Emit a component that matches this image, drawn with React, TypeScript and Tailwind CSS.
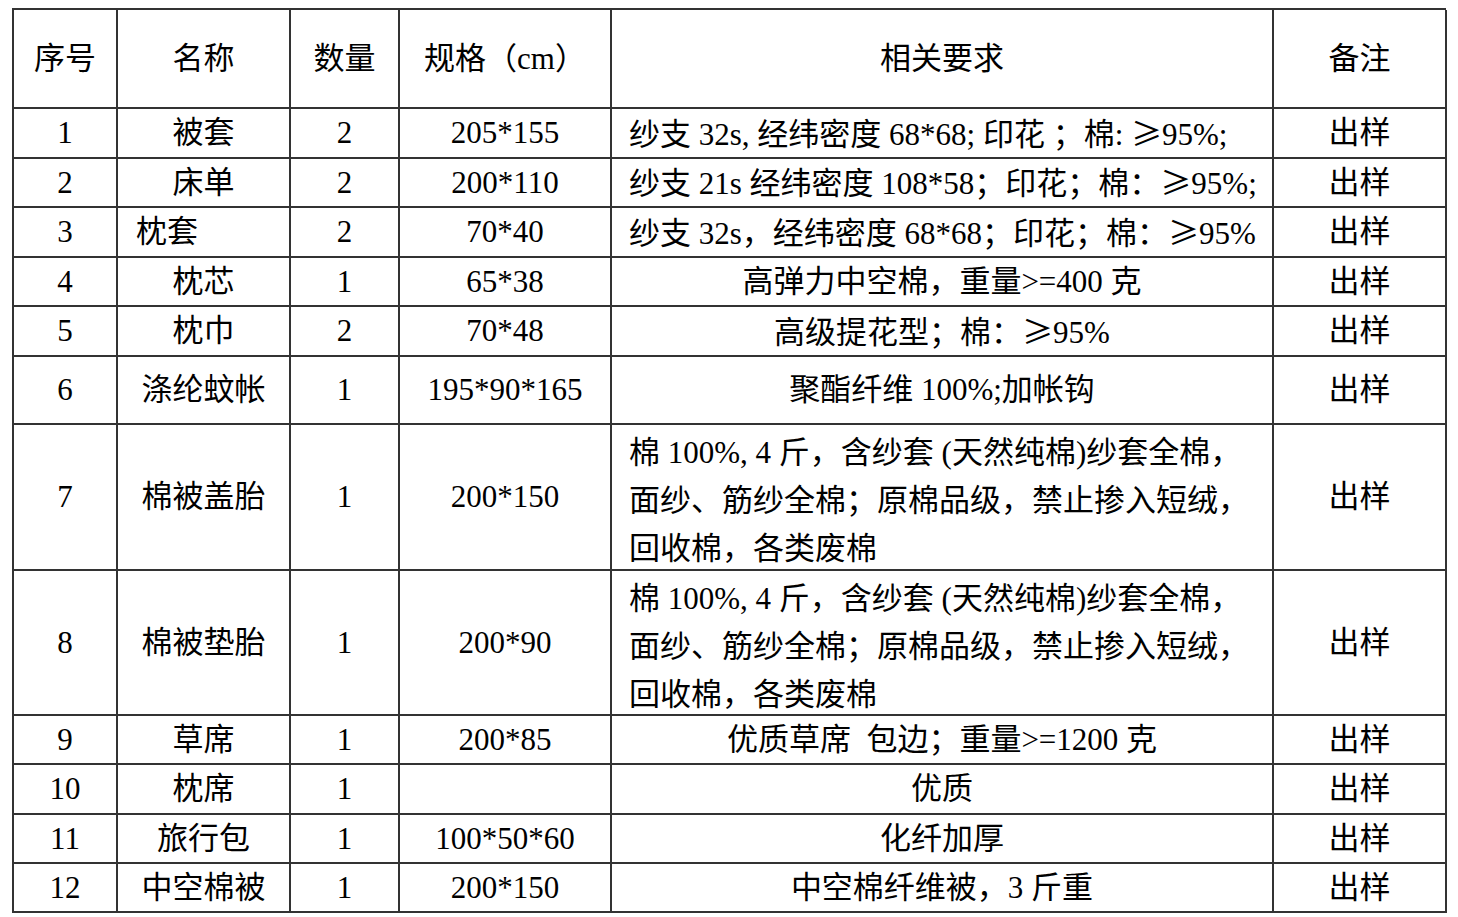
type Row = {
  no: string;
  name: string;
  qty: string;
  size: string;
  req: string[];
  note: string;
  h: string;
  nameLeft?: boolean;
  reqLeft?: boolean;
};

const rows: Row[] = [
  { no: "1", name: "被套", qty: "2", size: "205*155", req: ["纱支 32s, 经纬密度 68*68; 印花 ；棉: ≥95%;"], note: "出样", h: "h-[50px]", reqLeft: true },
  { no: "2", name: "床单", qty: "2", size: "200*110", req: ["纱支 21s 经纬密度 108*58；印花；棉：≥95%;"], note: "出样", h: "h-[49px]", reqLeft: true },
  { no: "3", name: "枕套", qty: "2", size: "70*40", req: ["纱支 32s，经纬密度 68*68；印花；棉：≥95%"], note: "出样", h: "h-[50px]", nameLeft: true, reqLeft: true },
  { no: "4", name: "枕芯", qty: "1", size: "65*38", req: ["高弹力中空棉，重量>=400 克"], note: "出样", h: "h-[49px]" },
  { no: "5", name: "枕巾", qty: "2", size: "70*48", req: ["高级提花型；棉：≥95%"], note: "出样", h: "h-[50px]" },
  { no: "6", name: "涤纶蚊帐", qty: "1", size: "195*90*165", req: ["聚酯纤维 100%;加帐钩"], note: "出样", h: "h-[68px]" },
  {
    no: "7",
    name: "棉被盖胎",
    qty: "1",
    size: "200*150",
    req: ["棉 100%, 4 斤，含纱套 (天然纯棉)纱套全棉，", "面纱、筋纱全棉；原棉品级，禁止掺入短绒，", "回收棉，各类废棉"],
    note: "出样",
    h: "h-[146px]",
    reqLeft: true,
  },
  {
    no: "8",
    name: "棉被垫胎",
    qty: "1",
    size: "200*90",
    req: ["棉 100%, 4 斤，含纱套 (天然纯棉)纱套全棉，", "面纱、筋纱全棉；原棉品级，禁止掺入短绒，", "回收棉，各类废棉"],
    note: "出样",
    h: "h-[145px]",
    reqLeft: true,
  },
  { no: "9", name: "草席", qty: "1", size: "200*85", req: ["优质草席  包边；重量>=1200 克"], note: "出样", h: "h-[49px]" },
  { no: "10", name: "枕席", qty: "1", size: "", req: ["优质"], note: "出样", h: "h-[50px]" },
  { no: "11", name: "旅行包", qty: "1", size: "100*50*60", req: ["化纤加厚"], note: "出样", h: "h-[49px]" },
  { no: "12", name: "中空棉被", qty: "1", size: "200*150", req: ["中空棉纤维被，3 斤重"], note: "出样", h: "h-[49px]" },
];

const cell = "border-r-2 border-b-2 border-[#333] flex items-center whitespace-pre";

// the ≥ sign is a full-width glyph in the source document
function Txt({ s }: { s: string }) {
  const parts = s.split("≥");
  return (
    <>
      {parts.map((p, i) => (
        <span key={i}>
          {i > 0 && <span className="font-['Noto_Sans_CJK_SC',sans-serif]">≥</span>}
          {p}
        </span>
      ))}
    </>
  );
}

export default function App() {
  return (
    <div className="bg-white w-[1458px] h-[917px] pt-[8px] pl-[12px] text-black text-[31px] leading-[48px] font-['Liberation_Serif','Noto_Sans_CJK_SC',serif]">
      <div className="grid grid-cols-[104px_173px_109px_212px_662px_173px] w-[1434px] border-t-2 border-l-2 border-[#333]">
        <div className={`${cell} h-[99px] justify-center`}>序号</div>
        <div className={`${cell} h-[99px] justify-center`}>名称</div>
        <div className={`${cell} h-[99px] justify-center`}>数量</div>
        <div className={`${cell} h-[99px] justify-center`}>规格（cm）</div>
        <div className={`${cell} h-[99px] justify-center`}>相关要求</div>
        <div className={`${cell} h-[99px] justify-center`}>备注</div>

        {rows.map((r) => (
          <div key={r.no} className="contents">
            <div className={`${cell} ${r.h} justify-center`}>{r.no}</div>
            <div className={`${cell} ${r.h} ${r.nameLeft ? "justify-start pl-[18px]" : "justify-center"}`}>{r.name}</div>
            <div className={`${cell} ${r.h} justify-center`}>{r.qty}</div>
            <div className={`${cell} ${r.h} justify-center`}>{r.size}</div>
            <div className={`${cell} ${r.h} ${r.reqLeft ? "justify-start pl-[17px]" : "justify-center"}`}>
              <div className={`flex flex-col ${r.req.length > 1 ? "pt-[8px]" : ""}`}>
                {r.req.map((line, i) => (
                  <span key={i}>
                    <Txt s={line} />
                  </span>
                ))}
              </div>
            </div>
            <div className={`${cell} ${r.h} justify-center`}>{r.note}</div>
          </div>
        ))}
      </div>
    </div>
  );
}
